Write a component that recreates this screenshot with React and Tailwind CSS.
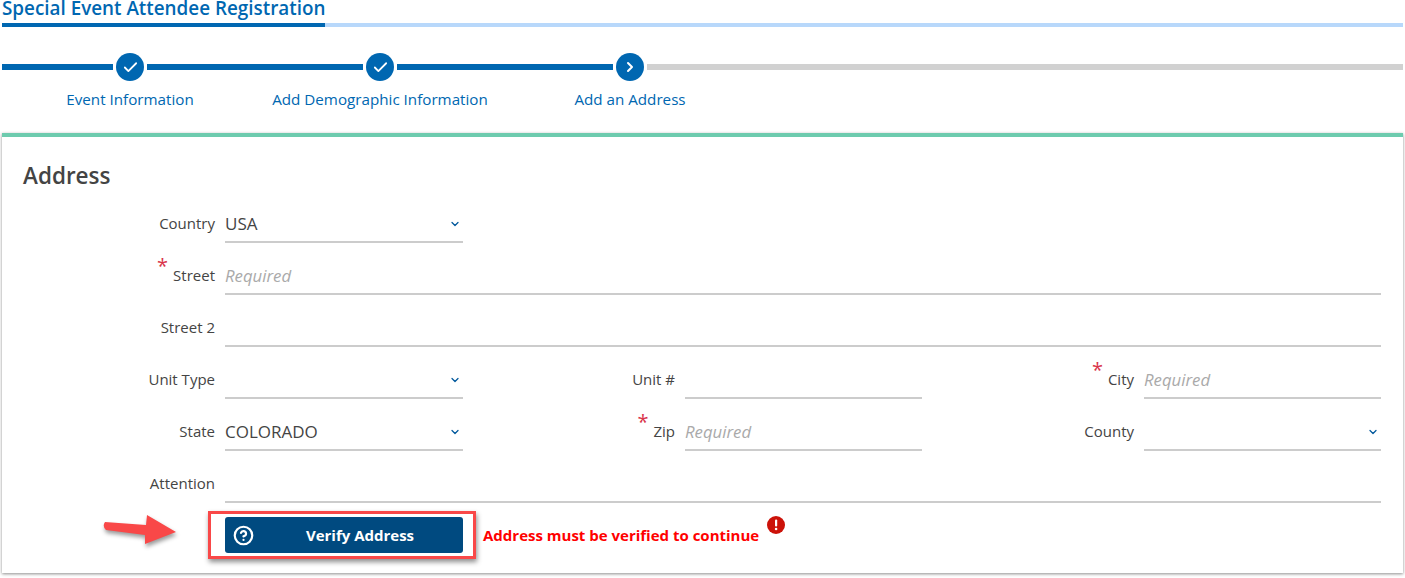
import React from 'react';
import { Check, ChevronDown, ChevronRight, CircleHelp } from 'lucide-react';

const FONT = { fontFamily: '"Open Sans", "Noto Sans", sans-serif' };

function Dot({ children }) {
  return (
    <div className="mx-[3px] flex h-[28px] w-[28px] shrink-0 items-center justify-center rounded-full bg-[#0067b1] text-white">
      {children}
    </div>
  );
}

function Label({ text, required }) {
  return (
    <div className="flex h-[52px] items-start justify-end pt-[22px] pr-[10px] text-[15px] leading-5 text-[#444444]">
      <span className="relative whitespace-nowrap">
        {required && <span className="absolute left-[-16px] top-[-9px] text-[20px] leading-5 text-[#d9344a]">*</span>}
        {text}
      </span>
    </div>
  );
}

function Field({ value, placeholder, select, className = '' }) {
  return (
    <div className={`flex h-[52px] items-end ${className}`}>
      <div className="flex h-[36px] w-full items-center justify-between border-b-2 border-[#cccccc] pb-[1px]">
        {value && <span className="text-[17px] text-[#444444]">{value}</span>}
        {placeholder && <span className="text-[16.75px] italic text-[#aaaaaa]">{placeholder}</span>}
        {!value && !placeholder && <span />}
        {select && <ChevronDown size={12} strokeWidth={2.5} className="mr-[2px] text-[#00589c]" />}
      </div>
    </div>
  );
}

export default function App() {
  return (
    <div className="h-[578px] w-[1405px] overflow-hidden bg-white" style={FONT}>
      <div className="px-[2px]">
        <div className="h-[27px] border-b-[4px] border-[#b8d8fb]">
          <div className="h-[27px] w-[323px] border-b-[4px] border-[#0067b1] whitespace-nowrap text-[18.85px] leading-[17px] font-semibold text-[#0067b1]">
            Special Event Attendee Registration
          </div>
        </div>

        {/* progress line */}
        <div className="mt-[26px] flex items-center">
          <div className="h-[6px] w-[111px] bg-[#0067b1]" />
          <Dot><Check size={17} strokeWidth={2.5} /></Dot>
          <div className="h-[6px] w-[216px] bg-[#0067b1]" />
          <Dot><Check size={17} strokeWidth={2.5} /></Dot>
          <div className="h-[6px] w-[216px] bg-[#0067b1]" />
          <Dot><ChevronRight size={16} strokeWidth={3} /></Dot>
          <div className="h-[6px] flex-1 bg-[#d1d1d1]" />
        </div>
        <div className="mt-[8px] ml-[3px] flex text-[15.2px] leading-5 text-[#0067b1]">
          <div className="w-[250px] whitespace-nowrap text-center">Event Information</div>
          <div className="w-[250px] whitespace-nowrap text-center">Add Demographic Information</div>
          <div className="w-[250px] whitespace-nowrap text-center">Add an Address</div>
        </div>

        <div className="mt-[24px] h-[440px] border-t-[4px] border-[#6dcbae] bg-white shadow-[0_1px_3px_rgba(0,0,0,0.45)]">
          <h2 className="pt-[24px] pl-[21px] text-[22.5px] leading-[30px] font-semibold text-[#444444]">Address</h2>
          <div className="ml-[21px] grid grid-cols-[202px_238px_222px_237px_222px_237px]">
            <Label text="Country" />
            <Field value="USA" select />
            <div className="col-span-4" />

            <Label text="Street" required />
            <Field placeholder="Required" className="col-span-5" />

            <Label text="Street 2" />
            <Field className="col-span-5" />

            <Label text="Unit Type" />
            <Field select />
            <Label text="Unit #" />
            <Field />
            <Label text="City" required />
            <Field placeholder="Required" />

            <Label text="State" />
            <Field value="COLORADO" select />
            <Label text="Zip" required />
            <Field placeholder="Required" />
            <Label text="County" />
            <Field select />

            <Label text="Attention" />
            <Field className="col-span-5" />

            {/* annotation arrow, sits in the label column */}
            <div className="relative h-[60px]">
              <svg width="80" height="40" viewBox="0 0 80 40" className="absolute left-[79px] top-[12px] drop-shadow-[1px_3px_2px_rgba(0,0,0,0.4)]">
                <path d="M3 7 L44 10 L45 0 L74 17 L43 29 L43 20 L4 15 Q0 11 3 7 Z" fill="#f94848" />
              </svg>
            </div>
            <div className="relative col-span-5 flex h-[60px] items-start pt-[14px]">
              <div className="absolute left-[-17px] top-[8px] h-[48px] w-[268px] border-[3px] border-[#f94848] shadow-[1px_3px_5px_rgba(0,0,0,0.45)]" />
              <button className="relative flex h-[36px] w-[238px] items-center rounded-[3px] bg-[#004a80] pl-[8px] text-white">
                <CircleHelp size={21} strokeWidth={2.5} />
                <span className="flex-1 pl-[3px] text-center text-[15px] font-bold">Verify Address</span>
              </button>
              <span className="relative ml-[20px] mt-[7px] whitespace-nowrap text-[15px] font-bold text-[#ff0000]">Address must be verified to continue</span>
              <svg width="18" height="18" viewBox="0 0 18 18" className="relative ml-[8px] mt-[-1px]">
                <circle cx="9" cy="9" r="9" fill="#cc1209" />
                <rect x="8" y="3.5" width="2.2" height="7" rx="1" fill="#fff" />
                <circle cx="9.1" cy="13" r="1.3" fill="#fff" />
              </svg>
            </div>
          </div>
        </div>
      </div>
    </div>
  );
}
